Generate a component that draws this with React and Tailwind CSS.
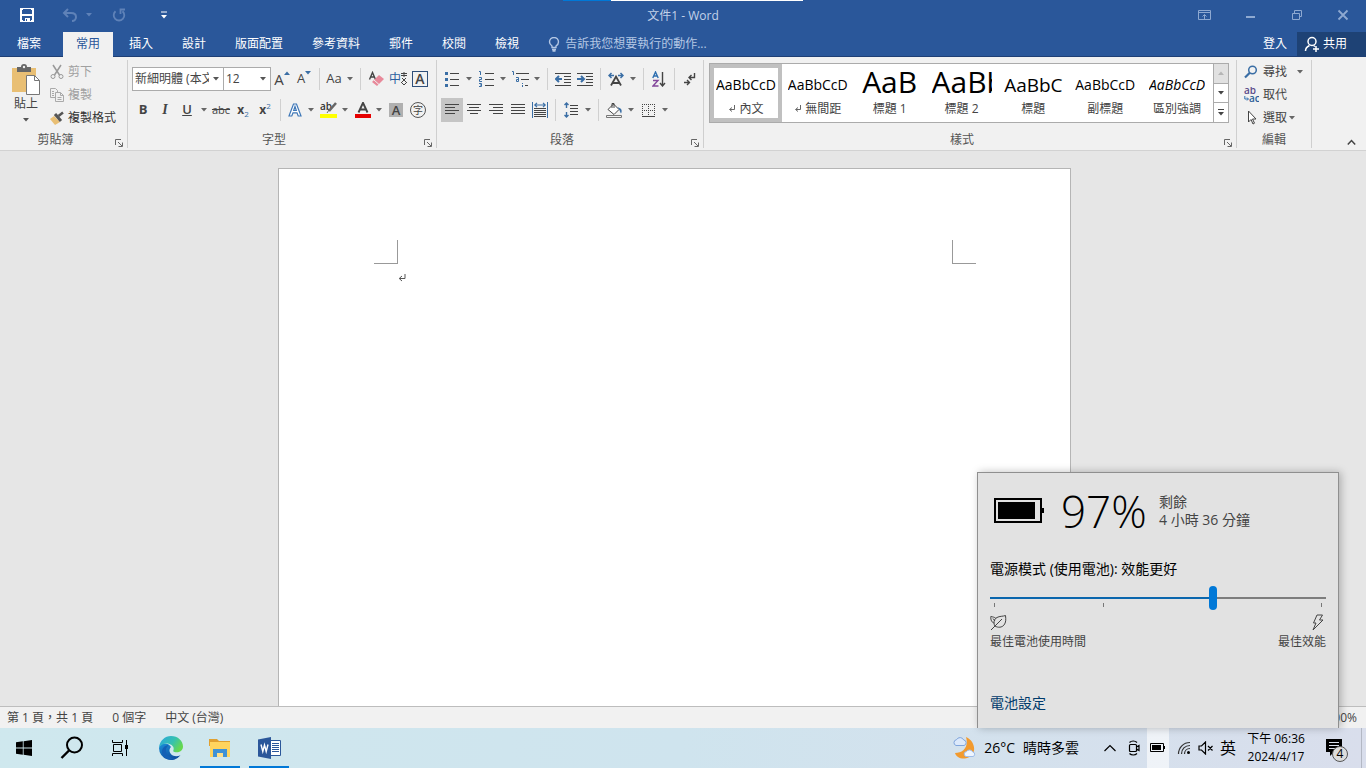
import { useState } from "react";

const tabs = ["插入", "設計", "版面配置", "參考資料", "郵件", "校閱", "檢視"];

const styleItems = [
  { name: "內文", mark: true, sample: "AaBbCcD", css: "text-sm leading-[26px]", active: true },
  { name: "無間距", mark: true, sample: "AaBbCcD", css: "text-sm leading-[26px]" },
  { name: "標題 1", sample: "AaB", css: "text-3xl leading-5" },
  { name: "標題 2", sample: "AaBb", css: "text-3xl leading-5" },
  { name: "標題", sample: "AaBbC", css: "text-[19px] leading-[26px]" },
  { name: "副標題", sample: "AaBbCcD", css: "text-sm leading-[26px]" },
  { name: "區別強調", sample: "AaBbCcD", css: "text-sm leading-[26px] italic" },
];

const Caret = ({ className = "" }) => (
  <svg width="6" height="4" viewBox="0 0 6 4" className={className}>
    <path d="M0 0h6L3 3.5z" fill="currentColor" />
  </svg>
);

const Icon = ({ w = 18, h = 18, children }) => (
  <svg
    width={w}
    height={h}
    viewBox={`0 0 ${w} ${h}`}
    fill="none"
    stroke="#444"
    strokeWidth="1"
    className="shrink-0"
  >
    {children}
  </svg>
);

const Tool = ({ label, active, children }) => (
  <button
    aria-label={label}
    className={`flex h-6 w-[22px] shrink-0 items-center justify-center ${
      active ? "bg-[#c5c5c5]" : "hover:bg-[#d5d5d5]"
    }`}
  >
    {children}
  </button>
);

const SplitTool = ({ label, small, children }) => (
  <button
    aria-label={label}
    className="flex h-6 shrink-0 items-center hover:bg-[#d5d5d5]"
  >
    <span
      className={`flex items-center justify-center ${small ? "w-5" : "w-[22px]"}`}
    >
      {children}
    </span>
    <span className="flex w-3 justify-center text-[#666]">
      <Caret />
    </span>
  </button>
);

const Separator = () => (
  <div className="flex w-[9px] shrink-0 justify-center">
    <div className="h-[22px] w-px bg-[#d0d0d0]"></div>
  </div>
);

const Group = ({ title, launcher, className = "", children }) => (
  <section
    className={`mt-[3px] mb-0.5 flex flex-col border-r border-[#cfcfcf] ${className}`}
  >
    <div className="h-[72px]">{children}</div>
    <div className="flex h-4 items-center text-[#555]">
      <span className="flex-1 text-center">{title}</span>
      {launcher && (
        <button
          aria-label={`${title}設定`}
          className="flex w-4 justify-center pt-1.5"
        >
          <Icon w={8} h={8}>
            <path d="M.5 6V.5H6M3 3l4 4M7.500 3.500v4h-4" stroke="#666" />
          </Icon>
        </button>
      )}
    </div>
  </section>
);

const TitleBar = () => (
  <div className="relative grid h-8 shrink-0 grid-cols-[1fr_auto_1fr] items-center text-[#7f9cc8]">
    <div className="absolute top-0 left-1/2 flex h-px w-60 -translate-x-1/2">
      <div className="w-12 bg-[#0078d7]"></div>
      <div className="flex-1 bg-white"></div>
    </div>
    <div className="flex items-center pb-0.5 pl-5">
      <button aria-label="儲存檔案" className="mr-7">
        <Icon w={14} h={14}>
          <path d="M1 1h12v12H1z" stroke="#fff" strokeWidth="2" />
          <path d="M3 8h8v5H3zM3 1h8v4H3z" fill="#2a579a" stroke="none" />
          <path d="M1 7h12" stroke="#fff" strokeWidth="2" />
          <path d="M5 10h5v3H5z" fill="#fff" stroke="none" />
          <path d="M6 11h1v2H6z" fill="#2a579a" stroke="none" />
        </Icon>
      </button>
      <button aria-label="復原" className="mr-5 flex items-center gap-2">
        <Icon w={16} h={14}>
          <path
            d="M6 1L2 5l4 4M2.500 5H9c7 0 6 8 1 8"
            stroke="#5f82b8"
            strokeWidth="2"
          />
        </Icon>
        <Caret className="text-[#5f82b8]" />
      </button>
      <button aria-label="重複" className="mr-[35px]">
        <Icon w={14} h={14}>
          <path
            d="M3.500 3.200A5.300 5.300 0 1 0 10.500 3.200M8.500 6V1.500H13"
            stroke="#5f82b8"
            strokeWidth="1.800"
          />
        </Icon>
      </button>
      <button aria-label="自訂快速存取工具列">
        <Icon w={6} h={8}>
          <path d="M0 1h6" stroke="#fff" />
          <path d="M0 4h6L3 7.500z" fill="#fff" stroke="none" />
        </Icon>
      </button>
    </div>
    <h1 className="text-[#c3d2e9]">文件1 - Word</h1>
    <div className="flex justify-end pb-0.5">
      <button aria-label="功能區顯示選項" className="flex w-[46px] justify-center">
        <Icon w={14} h={12}>
          <path
            d="M.5 1.500h12v9H.5zM.5 3.500h12M6.500 10V5.500M4.500 7.500l2-2 2 2"
            stroke="#8ea9d1"
          />
        </Icon>
      </button>
      <button aria-label="最小化" className="flex w-[46px] justify-center">
        <Icon w={10} h={12}>
          <path d="M0 8h9" stroke="#8ea9d1" strokeWidth="2" />
        </Icon>
      </button>
      <button aria-label="還原" className="flex w-[46px] justify-center">
        <Icon w={12} h={12}>
          <path d="M1.500 4.500h7v6h-7zM3.500 4V1.500h7v6H9" stroke="#8ea9d1" />
        </Icon>
      </button>
      <button aria-label="關閉" className="flex w-[46px] justify-center">
        <Icon w={12} h={12}>
          <path d="M1.500 1.500l9 9M10.500 1.500l-9 9" stroke="#8ea9d1" strokeWidth="1.800" />
        </Icon>
      </button>
    </div>
  </div>
);

const TabRow = () => (
  <nav className="flex h-[25px] shrink-0 items-stretch gap-[3px] border-b border-[#1e3f75] text-white">
    <button className="w-15 pr-0.5">檔案</button>
    <button className="-mb-px bg-[#f1f1f1] px-[13px] pb-0.5 text-[#2a579a]">
      常用
    </button>
    {tabs.map((tab) => (
      <button key={tab} className="px-[13px] hover:bg-[#3e6db5]">
        {tab}
      </button>
    ))}
    <label className="ml-3 flex flex-1 items-center gap-[5px] pl-px text-[#b4c7e4]">
      <Icon w={12} h={15}>
        <path
          d="M4 10.500V9C2.500 8 1.500 6.800 1.500 5a4.500 4.500 0 0 1 9 0c0 1.800-1 3-2.500 4v1.500zM4 12.500h4M4.500 14h3"
          stroke="#b4c7e4"
          strokeWidth="1.400"
        />
      </Icon>
      <input
        placeholder="告訴我您想要執行的動作..."
        className="w-44 bg-transparent placeholder:text-[#b4c7e4]"
      />
    </label>
    <button className="px-[7px]">登入</button>
    <button className="flex items-center gap-[3px] bg-[#1e4275] pr-[19px] pl-[7px]">
      <Icon w={16} h={16}>
        <circle cx="8" cy="5.500" r="4" stroke="#fff" strokeWidth="1.500" />
        <path
          d="M1.500 15c0-3 1.800-4.500 4-5.500M9.500 9.500l1.500 1M9 13h6M12 10v6"
          stroke="#fff"
          strokeWidth="1.500"
        />
      </Icon>
      共用
    </button>
  </nav>
);

const ClipboardGroup = () => (
  <Group title="剪貼簿" launcher className="w-32">
    <div className="flex pl-2.5">
      <button className="flex w-8 flex-col items-center pt-1">
        <Icon w={28} h={32}>
          <path d="M0 4h24v24H0z" fill="#e9bf74" stroke="none" />
          <path d="M5 3h4a3 3 0 0 1 6 0h4v5H5z" fill="#666" stroke="none" />
          <circle cx="12" cy="3" r="1.200" fill="#f1f1f1" stroke="none" />
          <path d="M14.500 11.500h8l5 5v14h-13z" fill="#fff" stroke="#777" />
          <path d="M22.500 11.500v5h5" stroke="#777" />
        </Icon>
        <span className="leading-4">貼上</span>
        <Caret className="mt-1.5 text-[#555]" />
      </button>
      <div className="flex flex-col pl-2 text-[#a0a0a0]">
        <button className="flex h-[23px] items-center gap-1">
          <Icon w={14} h={16}>
            <path d="M3 1l6.500 10M11 1L4.500 11" stroke="#999" strokeWidth="1.500" />
            <circle cx="3" cy="12.500" r="2" stroke="#999" />
            <circle cx="11" cy="12.500" r="2" stroke="#999" />
          </Icon>
          剪下
        </button>
        <button className="flex h-[23px] items-center gap-1">
          <Icon w={14} h={14}>
            <path
              d="M5 9.500H.5v-9h5l2 2V4M2 3.500h2M2 5.500h2M2 7.500h2M5.500 4.500h5l3 3v6h-8zM10.500 4.500v3h3M7.500 9.500h4M7.500 11.500h4"
              stroke="#aaa"
            />
          </Icon>
          複製
        </button>
        <button className="flex h-[23px] items-center gap-1 text-[#333]">
          <Icon w={14} h={14}>
            <path d="M4 5L0 8l5 6 5-3z" fill="#e9bf74" stroke="none" />
            <path d="M5 3l6 7" stroke="#555" strokeWidth="3" />
            <path d="M8.500 5L13 1.500" stroke="#555" strokeWidth="2.500" />
          </Icon>
          複製格式
        </button>
      </div>
    </div>
  </Group>
);

const Combo = ({ label, value, className }) => (
  <label className={`relative flex h-6 border border-[#ababab] bg-white ${className}`}>
    <select
      aria-label={label}
      className="w-full appearance-none overflow-hidden pr-3.5 pl-0.5 whitespace-nowrap"
    >
      <option>{value}</option>
    </select>
    <span className="pointer-events-none absolute top-0 right-0 flex h-full w-3.5 items-center justify-center bg-white text-[#555]">
      <Caret />
    </span>
  </label>
);

const FontGroup = () => (
  <Group title="字型" launcher>
    <div className="flex flex-col gap-[7px] pt-[7px] pr-[5px] pl-1">
      <div className="flex items-center">
        <Combo label="字型" value="新細明體 (本文)" className="w-[92px]" />
        <Combo label="字型大小" value="12" className="-ml-px w-12" />
        <Tool label="放大字型">
          <span className="text-[15px]">A</span>
          <Caret className="mb-3 rotate-180 text-[#3a6ea5]" />
        </Tool>
        <Tool label="縮小字型">
          <span className="text-[13px]">A</span>
          <Caret className="mb-3 text-[#3a6ea5]" />
        </Tool>
        <Separator />
        <SplitTool label="大小寫轉換" small>
          <span className="text-[13px]">Aa</span>
        </SplitTool>
        <Separator />
        <Tool label="清除所有格式設定">
          <Icon w={16} h={16}>
            <path d="M1.500 8.500L4.500 1.500l3 7M2.500 6h4" strokeWidth="1.400" />
            <path d="M4 11l7-7 5 4-7 7z" fill="#e8899a" stroke="none" />
            <path d="M6 9l5 4.500" stroke="#f1f1f1" />
          </Icon>
        </Tool>
        <Tool label="注音標示">
          <span className="text-[#2a5f9e]">中</span>
          <Icon w={6} h={14}>
            <path d="M0 1.500h6M0 3.500h6M3 0v5M1 6l4 4M5 6l-4 4M0 10l3 3 3-3" />
          </Icon>
        </Tool>
        <Tool label="字元框線">
          <span className="flex size-4 items-center justify-center border border-[#2f4f7a] text-sm leading-none font-semibold">
            A
          </span>
        </Tool>
      </div>
      <div className="flex items-center">
        <Tool label="粗體">
          <b className="text-[13px]">B</b>
        </Tool>
        <Tool label="斜體">
          <i className="font-['Liberation_Serif'] text-sm font-bold">I</i>
        </Tool>
        <SplitTool label="底線">
          <span className="text-[13px] font-semibold underline">U</span>
        </SplitTool>
        <Tool label="刪除線">
          <s className="text-[11px]">abc</s>
        </Tool>
        <Tool label="下標">
          <b>x</b>
          <span className="mt-2 text-[8px] text-[#3a6ea5]">2</span>
        </Tool>
        <Tool label="上標">
          <b>x</b>
          <span className="mb-2 text-[8px] text-[#3a6ea5]">2</span>
        </Tool>
        <Separator />
        <SplitTool label="文字效果" small>
          <Icon w={14} h={16}>
            <path
              d="M1 14L5.500 2h3L13 14h-2.800L9 10.800H5L3.800 14zM5.700 8.500h2.600L7 4.500z"
              stroke="#3f78b8"
              strokeWidth="1.200"
              fill="#fff"
            />
          </Icon>
        </SplitTool>
        <span className="w-0.5"></span>
        <SplitTool label="文字醒目提示色彩" small>
          <Icon w={18} h={16}>
            <text x="0" y="8" fontSize="10" fontWeight="600" fill="#333" stroke="none">
              ab
            </text>
            <path d="M16 1L9 9" stroke="#666" strokeWidth="2.500" />
            <path d="M9 8l-2 3" stroke="#666" />
            <path d="M0 12h17v4H0z" fill="#ffff00" stroke="none" />
          </Icon>
        </SplitTool>
        <span className="w-0.5"></span>
        <SplitTool label="字型色彩" small>
          <Icon w={16} h={16}>
            <path d="M3.500 10.500L8 0.800l4.500 9.700M5 7.500h6" strokeWidth="1.900" />
            <path d="M0 12h16v4H0z" fill="#e60000" stroke="none" />
          </Icon>
        </SplitTool>
        <Tool label="字元網底">
          <span className="flex size-[14px] items-center justify-center bg-[#b0b0b0] text-[13px] leading-none font-semibold">
            A
          </span>
        </Tool>
        <Tool label="圍繞字元">
          <span className="flex size-4 items-center justify-center rounded-full border border-[#555] text-[10px] leading-none">
            字
          </span>
        </Tool>
      </div>
    </div>
  </Group>
);

const ParagraphGroup = () => (
  <Group title="段落" launcher>
    <div className="flex flex-col gap-[7px] pt-[7px] pr-0.5 pl-1">
      <div className="flex items-center">
        <SplitTool label="項目符號">
          <Icon w={14} h={16}>
            <path d="M5 2.500h9M5 8.500h9M5 14.500h9" />
            <path
              d="M0 1h3v3H0zM0 7h3v3H0zM0 13h3v3H0z"
              fill="#3a6ea5"
              stroke="none"
            />
          </Icon>
        </SplitTool>
        <SplitTool label="編號">
          <Icon w={15} h={16}>
            <path d="M6 2.500h9M6 8.500h9M6 14.500h9" />
            <path
              d="M0 .5h1.500V4M0 6.500h2.500v2H.5v2H3M0 12.500h2.500v3H0M1 14h1.500"
              stroke="#3a6ea5"
            />
          </Icon>
        </SplitTool>
        <SplitTool label="多層次清單">
          <Icon w={17} h={16}>
            <path d="M4 2.500h13M9 8.500h8M13 14.500h3" />
            <path
              d="M0 .5h1.500V4M4 6.500h2.500v4H4.500v-2H6M10.500 12v1M10.500 14v2"
              stroke="#3a6ea5"
            />
          </Icon>
        </SplitTool>
        <Separator />
        <Tool label="減少縮排">
          <Icon w={16} h={14}>
            <path d="M0 1.500h16M9 4.500h7M9 7.500h7M9 10.500h7M0 13.500h16" />
            <path d="M4 4L1 7l3 3M1 7h6" stroke="#3a6ea5" strokeWidth="2" />
          </Icon>
        </Tool>
        <Tool label="增加縮排">
          <Icon w={16} h={14}>
            <path d="M0 1.500h16M9 4.500h7M9 7.500h7M9 10.500h7M0 13.500h16" />
            <path d="M4 4l3 3-3 3M7 7H0" stroke="#3a6ea5" strokeWidth="2" />
          </Icon>
        </Tool>
        <Separator />
        <SplitTool label="亞洲方式配置">
          <Icon w={16} h={14}>
            <path d="M3 13.500L8 4.500l5 9M5 11h6" strokeWidth="1.800" />
            <path
              d="M6 3.500H.8M3.500 1L1 3.500 3.500 6M10 3.500h5.200M12.500 1L15 3.500 12.500 6"
              stroke="#3a6ea5"
              strokeWidth="1.500"
            />
          </Icon>
        </SplitTool>
        <Separator />
        <Tool label="排序">
          <Icon w={14} h={16}>
            <path d="M.8 7l2.700-6 2.700 6M1.800 5h3.400" stroke="#2f6fb0" strokeWidth="1.400" />
            <path d="M1 9.500h5l-5 5.500h5.500" stroke="#83479b" strokeWidth="1.400" />
            <path d="M10.500 1v14M8 12l2.500 3 2.500-3" strokeWidth="1.400" />
          </Icon>
        </Tool>
        <Separator />
        <Tool label="顯示/隱藏編輯標記">
          <Icon w={12} h={14}>
            <path
              d="M10.500 1v4.500H5M7.500 3L5 5.500 7.500 8M0 10.500h5M3 8l2.500 2.500L3 13"
              strokeWidth="1.400"
            />
          </Icon>
        </Tool>
      </div>
      <div className="flex items-center">
        <Tool label="靠左對齊" active>
          <Icon w={14} h={12}>
            <path d="M0 .5h14M0 3.500h10M0 6.500h14M0 9.500h10" />
          </Icon>
        </Tool>
        <Tool label="置中">
          <Icon w={14} h={12}>
            <path d="M0 .5h14M2 3.500h10M0 6.500h14M3 9.500h8" />
          </Icon>
        </Tool>
        <Tool label="靠右對齊">
          <Icon w={14} h={12}>
            <path d="M0 .5h14M4 3.500h10M0 6.500h14M4 9.500h10" />
          </Icon>
        </Tool>
        <Tool label="左右對齊">
          <Icon w={14} h={12}>
            <path d="M0 .5h14M0 3.500h14M0 6.500h14M0 9.500h14" />
          </Icon>
        </Tool>
        <Tool label="分散對齊">
          <Icon w={16} h={16}>
            <path d="M.5 0v16M15.500 0v16" stroke="#3a6ea5" />
            <path d="M2 6.500h12M2 8.500h12M2 10.500h12M2 12.500h12M2 14.500h12" />
            <path
              d="M3 3h10M5 .8L2.800 3 5 5.200M11 .8L13.200 3 11 5.200"
              stroke="#3a6ea5"
              strokeWidth="1.200"
            />
          </Icon>
        </Tool>
        <Separator />
        <SplitTool label="行距與段落間距">
          <Icon w={14} h={16}>
            <path d="M6 3.500h8M6 6.500h8M6 9.500h8M6 12.500h8" />
            <path
              d="M2.500 1v5M.5 3l2-2 2 2M2.500 10v5M.5 13l2 2 2-2"
              stroke="#3a6ea5"
              strokeWidth="1.400"
            />
          </Icon>
        </SplitTool>
        <Separator />
        <SplitTool label="網底">
          <Icon w={17} h={16}>
            <path d="M2 7.500L7.500 2l5.500 5.500-5 5zM6 6V1.500h2V6" fill="#fff" />
            <path d="M11.500 5l3 1.500c1.500 1 1.500 3.500.5 5-1-1-1-3-2-4z" fill="#3a6ea5" stroke="none" />
            <path d="M.5 13.500h15v2H.5z" stroke="#777" />
          </Icon>
        </SplitTool>
        <SplitTool label="框線">
          <Icon w={13} h={13}>
            <path
              d="M.5 0v13M6.500 0v13M12.500 0v13M0 .5h13M0 6.500h13"
              strokeDasharray="1 1"
            />
            <path d="M0 12.500h13" />
          </Icon>
        </SplitTool>
      </div>
    </div>
  </Group>
);

const StylesGroup = () => (
  <Group title="樣式" launcher className="min-w-0 flex-1">
    <div className="pt-[3px] pr-[7px] pl-[5px]">
      <div className="flex h-[60px] border border-[#ababab] bg-white">
        {styleItems.map((item) => (
          <button
            key={item.name}
            className={`flex min-w-0 flex-1 flex-col items-center justify-end overflow-hidden border-4 ${
              item.active ? "border-[#c0c0c0]" : "border-transparent"
            }`}
          >
            <span
              className={`h-7 max-w-[60px] overflow-hidden whitespace-nowrap text-black ${item.css}`}
            >
              {item.sample}
            </span>
            <span className="flex h-[18px] items-center gap-1">
              {item.mark && (
                <Icon w={7} h={8}>
                  <path d="M6.500 0v4.500H2M4 2.500l-2.500 2L4 6.500" stroke="#666" />
                </Icon>
              )}
              {item.name}
            </span>
          </button>
        ))}
        <div className="flex w-[15px] shrink-0 flex-col divide-y divide-[#ababab] border-l border-[#ababab]">
          <button
            aria-label="上一列"
            className="flex flex-1 items-center justify-center bg-[#e1e1e1] text-[#b5b5b5]"
          >
            <Caret className="rotate-180" />
          </button>
          <button aria-label="下一列" className="flex flex-1 items-center justify-center">
            <Caret />
          </button>
          <button
            aria-label="其他樣式"
            className="flex flex-1 flex-col items-center justify-center gap-0.5"
          >
            <span className="h-px w-1.5 bg-[#444]"></span>
            <Caret />
          </button>
        </div>
      </div>
    </div>
  </Group>
);

const EditingGroup = () => (
  <Group title="編輯" className="w-[75px]">
    <div className="flex flex-col pl-[7px]">
      <button className="flex h-[23px] items-center gap-1">
        <Icon w={14} h={14}>
          <circle cx="8.500" cy="5" r="3.800" stroke="#3a6ea5" strokeWidth="1.500" />
          <path d="M5.800 7.800L1 12.500" stroke="#3a6ea5" strokeWidth="2.200" />
        </Icon>
        <span className="ml-px">尋找</span>
        <Caret className="ml-1.5 text-[#666]" />
      </button>
      <button className="flex h-[23px] items-center gap-1">
        <Icon w={15} h={16}>
          <text x="0" y="7" fontSize="10" fontWeight="600" fill="#5b4a8a" stroke="none">
            ab
          </text>
          <text x="5" y="15" fontSize="10" fontWeight="600" fill="#2b5f9a" stroke="none">
            ac
          </text>
          <path d="M.8 9v3H4M3 10.500L4.500 12 3 13.500" stroke="#2f6fb0" />
        </Icon>
        取代
      </button>
      <button className="flex h-[23px] items-center gap-1">
        <Icon w={14} h={15}>
          <path d="M4.500 1v11l2.500-2.500 2 4.500 1.500-.8-2-4.200H12z" fill="#fff" />
        </Icon>
        <span className="ml-px">選取</span>
        <Caret className="-ml-0.5 text-[#666]" />
      </button>
    </div>
  </Group>
);

const DocumentArea = () => (
  <main className="flex min-h-0 flex-1 justify-center overflow-hidden bg-[#e6e6e6] pt-[17px] pr-[17px]">
    <article className="w-[793px] border border-b-0 border-[#b5b5b5] bg-white pt-[71px] pr-[94px] pl-[95px]">
      <div className="flex justify-between">
        <div className="size-6 border-r border-b border-[#999]"></div>
        <div className="size-6 border-b border-l border-[#999]"></div>
      </div>
      <div className="pt-2.5 pl-6">
        <Icon w={8} h={9}>
          <path d="M7 0v4.500H1.500M4 2L1.200 4.500 4 7" stroke="#555" />
        </Icon>
      </div>
    </article>
  </main>
);

const StatusBar = () => (
  <footer className="flex h-[22px] shrink-0 items-center border-t border-[#bdbdbd] bg-[#f1f1f1] px-[7px] text-[#444]">
    <span>第 1 頁，共 1 頁</span>
    <span className="ml-[19px]">0 個字</span>
    <span className="ml-[19px] flex-1">中文 (台灣)</span>
    <span className="mr-0.5">100%</span>
  </footer>
);

const BatteryFlyout = () => {
  const [mode, setMode] = useState(2);

  return (
    <aside className="absolute right-[27px] bottom-10 flex h-64 w-[362px] flex-col border border-b-0 border-[#8f8f8f] bg-[#e2e2e2] px-3 text-black shadow-[2px_0_8px_rgba(0,0,0,0.25)]">
      <div className="flex h-[75px] items-center pl-1">
        <Icon w={50} h={26}>
          <path d="M1 1h46v23H1z" stroke="#000" strokeWidth="2" />
          <path d="M4 4h37v17H4zM48 10h2v5h-2z" fill="#000" stroke="none" />
        </Icon>
        <span className="ml-[17px] w-[98px] text-[44px] leading-none font-light">
          97%
        </span>
        <div className="text-sm leading-[18px] text-[#444]">
          <p>剩餘</p>
          <p>4 小時 36 分鐘</p>
        </div>
      </div>
      <label htmlFor="power-mode" className="mt-2.5 text-sm leading-[22px]">
        電源模式 (使用電池): 效能更好
      </label>
      <input
        id="power-mode"
        type="range"
        min="0"
        max="3"
        value={mode}
        onChange={(e) => setMode(Number(e.target.value))}
        className="mt-1.5 h-6 w-full appearance-none bg-[linear-gradient(to_right,#0a66ad_66%,#7d7d7d_66%)] bg-[length:100%_2px] bg-center bg-no-repeat [&::-webkit-slider-thumb]:h-6 [&::-webkit-slider-thumb]:w-2 [&::-webkit-slider-thumb]:appearance-none [&::-webkit-slider-thumb]:rounded [&::-webkit-slider-thumb]:bg-[#0078d7]"
      />
      <div className="-mt-[7px] flex justify-between px-1">
        <span className="h-1 w-px bg-[#777]"></span>
        <span className="h-1 w-px bg-[#777]"></span>
        <span className="h-1 w-px"></span>
        <span className="h-1 w-px bg-[#777]"></span>
      </div>
      <div className="mt-[7px] flex justify-between text-[#444]">
        <div className="flex flex-col gap-[3px]">
          <Icon w={17} h={17}>
            <path d="M1 16L12 5M5 12c-2-3-1-7 2-8.500C9.500 2 13 2.500 15.500 1.500c.5 4 .5 7-1.500 9.500-2 2.500-6 3-9 1zM4.500 9C2 9 .5 6 .8 2.500c2 .5 3.500.5 5 1.800M3 4.500l2 2.500" />
          </Icon>
          <span>最佳電池使用時間</span>
        </div>
        <div className="flex flex-col items-end gap-[3px]">
          <Icon w={17} h={17}>
            <path d="M8 1h5.500L10.500 6H14L4 16l3-7H4.500z" />
          </Icon>
          <span>最佳效能</span>
        </div>
      </div>
      <a href="#battery" className="mt-[43px] text-sm text-[#003a6b]">
        電池設定
      </a>
    </aside>
  );
};

const TaskButton = ({ label, open, children }) => (
  <button aria-label={label} className="flex h-10 w-12 flex-col items-center">
    <span className="flex h-[38px] items-center pt-0.5">{children}</span>
    {open && <span className="h-0.5 w-10 bg-[#0078d7]"></span>}
  </button>
);

const Taskbar = () => (
  <div className="flex h-10 shrink-0 items-center bg-linear-to-r from-[#cfe8ee] via-[#cfe4ee] to-[#d9deec] text-black">
    <TaskButton label="開始">
      <Icon w={16} h={16}>
        <path
          d="M0 2.300L6.800 1.300v6.300H0zM7.600 1.200L16 0v7.600H7.600zM0 8.400h6.800v6.300L0 13.700zM7.600 8.400H16V16l-8.400-1.200z"
          fill="#000"
          stroke="none"
        />
      </Icon>
    </TaskButton>
    <TaskButton label="搜尋">
      <Icon w={24} h={24}>
        <circle cx="14.500" cy="9" r="7.500" stroke="#000" strokeWidth="2" />
        <path d="M9 14.500L1.500 22" stroke="#000" strokeWidth="2.400" />
      </Icon>
    </TaskButton>
    <TaskButton label="工作檢視">
      <Icon w={17} h={16}>
        <path
          d="M.5 0v2.500h10V0M.5 16v-2.500h10V16M1.500 4.500h8v7h-8zM14.500 0v16"
          stroke="#000"
        />
        <path d="M13 5h3v4h-3z" fill="#000" stroke="none" />
      </Icon>
    </TaskButton>
    <div className="ml-[3px] flex flex-1 gap-px">
      <TaskButton label="Microsoft Edge">
        <svg width="24" height="24" viewBox="0 0 24 24">
          <defs>
            <linearGradient id="edge-top" x1="0" y1="0" x2="1" y2="0.500">
              <stop offset="0" stopColor="#2aa5e0" />
              <stop offset="0.600" stopColor="#35c1b0" />
              <stop offset="1" stopColor="#66d84f" />
            </linearGradient>
            <linearGradient id="edge-left" x1="0" y1="0" x2="0.600" y2="1">
              <stop offset="0" stopColor="#1b8fd8" />
              <stop offset="1" stopColor="#0f4fa0" />
            </linearGradient>
          </defs>
          <path d="M0 12a12 12 0 0 0 21.500 7.300c-8 3.500-14-3.500-9.500-8.300C9 6 1 6.500 0 12z" fill="url(#edge-left)" />
          <path d="M7 12.500c-1 6 5 11.500 11 10-4 1.500-10 2-13.500-2C1.500 16 3 10 9.500 9z" fill="#1460b5" />
          <path d="M0 11.500C.8 4.500 6 0 12 0c7 0 12 5 12 10.500 0 5-5 6.500-8.500 5.500-2-.5-1-1.500-.8-3C15 8 5 4.500 0 11.500z" fill="url(#edge-top)" />
        </svg>
      </TaskButton>
      <TaskButton label="檔案總管" open>
        <svg width="22" height="20" viewBox="0 0 22 20">
          <path d="M0 1h8l2 2h11v5H0z" fill="#e0a030" />
          <path d="M1 4h20v15H1z" fill="#ffd45e" />
          <path d="M4 11h14v8h-4v-3H8v3H4z" fill="#3f92d6" />
          <path d="M8 15h6v4H8z" fill="#ffe08a" />
        </svg>
      </TaskButton>
      <TaskButton label="Word" open>
        <svg width="23" height="22" viewBox="0 0 23 22">
          <path d="M12 3.500h10.500v15H12z" fill="#fff" stroke="#2b579a" />
          <path d="M14 6.500h7M14 8.500h7M14 10.500h7M14 12.500h7M14 14.500h7" stroke="#2b579a" />
          <path d="M0 2.500L13 0v22L0 19.500z" fill="#2b579a" />
          <path d="M3 7.500l1.800 7L6.500 8l1.700 6.500 1.800-7" fill="none" stroke="#fff" strokeWidth="1.400" />
        </svg>
      </TaskButton>
    </div>
    <button className="mr-[19px] flex items-center gap-2 text-sm">
      <svg width="24" height="24" viewBox="0 0 24 24">
        <path d="M14 1c11 5 11 20-1 21.500C8 23 4 20.500 3 17c8 0 14-6 11-16z" fill="#f29a2e" />
        <path d="M4 9.500a3 3 0 0 1 .5-5.800 4 4 0 0 1 7.200.3A2.800 2.800 0 0 1 12 9.500z" fill="#dce9fb" stroke="#7fa4dc" />
        <path d="M14 20.500a2.500 2.500 0 0 1 .5-4.900 3.500 3.500 0 0 1 6.200.4 2.300 2.300 0 0 1 .3 4.500z" fill="#eef5ff" stroke="#9dbce8" />
      </svg>
      <span>26°C</span>
      <span>晴時多雲</span>
    </button>
    <button aria-label="顯示隱藏的圖示" className="flex w-6 justify-center">
      <Icon w={12} h={8}>
        <path d="M.5 7L6 1.500 11.500 7" stroke="#000" strokeWidth="1.200" />
      </Icon>
    </button>
    <button aria-label="立即開會" className="flex w-6 justify-center">
      <Icon w={13} h={16}>
        <path
          d="M3.500 4.500h5q1 0 1 1v5q0 1-1 1h-5q-1 0-1-1v-5q0-1 1-1zM9.500 7l2.500-1.500v5L9.500 9M2.500 2.500C4.500.5 8 .5 10 2.500M2.500 13.500c2 2 5.500 2 7.500 0"
          stroke="#000"
          strokeWidth="1.200"
        />
      </Icon>
    </button>
    <button
      aria-label="電池"
      className="ml-px flex h-10 w-[22px] items-center justify-center bg-white/60"
    >
      <Icon w={16} h={10}>
        <path d="M.5 .5h13v8H.5z" stroke="#000" />
        <path d="M2 2h9v5H2zM14 3h1v3h-1z" fill="#000" stroke="none" />
      </Icon>
    </button>
    <button aria-label="網路" className="ml-1 flex w-[22px] justify-center">
      <Icon w={14} h={14}>
        <path
          d="M1.500 13C1.500 6.500 6.500 1.500 13 1.500M4.500 13c0-5 3.500-8.500 8.500-8.500M7.500 13C7.500 9.800 9.800 7.500 13 7.500"
          stroke="#333"
          strokeWidth="1.200"
        />
        <circle cx="11.500" cy="11.500" r="1.500" fill="#000" stroke="none" />
      </Icon>
    </button>
    <button aria-label="音量" className="flex w-[22px] justify-center">
      <Icon w={16} h={14}>
        <path
          d="M1 5v4h2.500L7.500 13V1L3.500 5zM10 5l4.500 4.500M14.500 5L10 9.500"
          stroke="#000"
          strokeWidth="1.200"
        />
      </Icon>
    </button>
    <button className="ml-[3px] text-base">英</button>
    <time className="ml-2 w-16 text-center leading-[18px]">
      下午 06:36
      <br />
      2024/4/17
    </time>
    <button
      aria-label="通知"
      className="ml-2 flex h-10 w-[46px] items-center border-r border-[#b3b8c4] pl-2"
    >
      <span className="relative">
        <Icon w={24} h={20}>
          <path d="M2 1h16v13H10l-4 4v-4H2z" fill="#000" stroke="none" />
          <path d="M5 4.500h10M5 7.500h10M5 10.500h7" stroke="#dbe0ec" />
        </Icon>
        <span className="absolute top-2 left-2 flex size-4 items-center justify-center rounded-full border border-[#555] bg-[#dcdcdc]">
          4
        </span>
      </span>
    </button>
    <span className="w-1"></span>
  </div>
);

const App = () => (
  <div className="relative flex h-screen flex-col overflow-hidden font-['Open_Sans','Noto_Sans_CJK_TC',sans-serif] text-xs text-[#444]">
    <header className="flex flex-col bg-[#2a579a]">
      <TitleBar />
      <TabRow />
    </header>
    <div className="flex shrink-0 border-b border-[#d2d2d2] bg-[#f1f1f1]">
      <ClipboardGroup />
      <FontGroup />
      <ParagraphGroup />
      <StylesGroup />
      <EditingGroup />
      <div className="flex w-[54px] items-end justify-end pr-2.5 pb-1">
        <button aria-label="摺疊功能區">
          <Icon w={9} h={7}>
            <path d="M.8 5.500l3.700-4 3.700 4" strokeWidth="1.500" />
          </Icon>
        </button>
      </div>
    </div>
    <DocumentArea />
    <StatusBar />
    <Taskbar />
    <BatteryFlyout />
  </div>
);

export default App;
